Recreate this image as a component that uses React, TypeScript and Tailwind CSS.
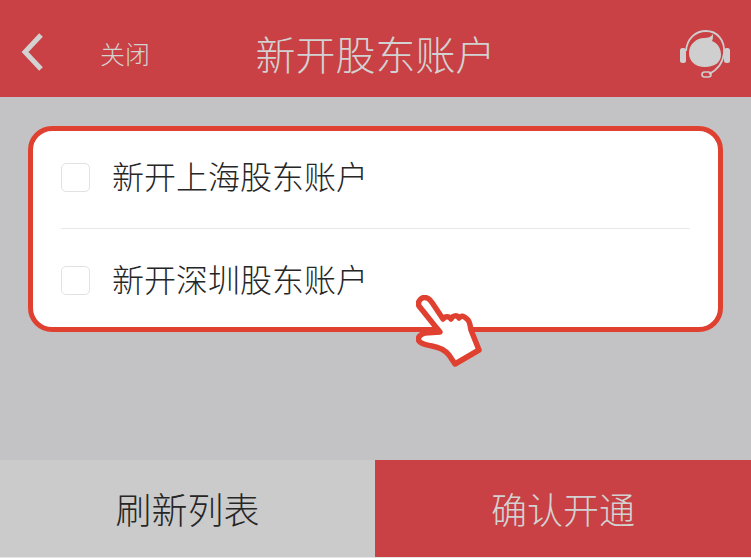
const cjk = { fontFamily: '"Noto Sans CJK SC", sans-serif' };

function Row({ label, className }: { label: string; className: string }) {
  return (
    <div className={`flex items-center ${className}`}>
      <span className="w-[29px] h-[29px] rounded-[5px] border border-[#e2e2e2] bg-white shrink-0" />
      <span className="ml-[22px] mb-[4px] text-[32px] leading-none text-[#262626] font-light">{label}</span>
    </div>
  );
}

function Hand() {
  return (
    <svg className="absolute left-[416px] top-[295px]" width="68" height="72" viewBox="0 0 68 72">
      <path
        d="M3 11 C1 6 6 1 11 3 C14 4 15 6 17 9 L27 24 C29 21 33 21 35 24 C37 20 41 20 43 23 C45 20 48 21 51 24 C54 26 54 30 55 35 L61 50 L63 55 L39 69 L33 60 C28 54 22 52 16 51 C10 50 5 49 3 46 C1 42 5 39 9 38 L24 37 L19 31 Z"
        fill="#ffffff"
        stroke="#e04030"
        strokeWidth="5.5"
        strokeLinejoin="round"
      />
    </svg>
  );
}

function Headset() {
  return (
    <svg width="50" height="50" viewBox="0 0 50 50" className="absolute left-[680px] top-[29px]">
      <path d="M6 22 C7 9 16 2 26 2 C37 2 45 11 44 24 C43 34 37 41 29 45" fill="none" stroke="#cfcfcf" strokeWidth="1.8" />
      <path d="M9 24 C9 15 17 9 24 9 C28 9 31 8 33 5 C33 8 33 10 32 12 C38 14 41 20 41 26 C41 33 35 38 25 38 C15 38 9 32 9 24 Z" fill="#cfcfcf" />
      <rect x="0" y="19" width="6" height="15" rx="2.5" fill="#cfcfcf" />
      <rect x="44" y="19" width="6" height="15" rx="2.5" fill="#cfcfcf" />
      <rect x="22" y="43" width="9" height="5" rx="2.5" fill="none" stroke="#cfcfcf" strokeWidth="1.6" />
    </svg>
  );
}

export default function App() {
  return (
    <div className="relative w-[751px] h-[558px] overflow-hidden flex flex-col bg-[#c3c3c6]" style={cjk}>
      <header className="h-[97px] shrink-0 bg-[#c94144] flex items-center relative text-[#d2d2d2]">
        <svg width="24" height="40" viewBox="0 0 24 40" className="ml-[21px] mt-[7px]">
          <path d="M20 3 L4 20 L20 37" fill="none" stroke="#d2d2d2" strokeWidth="5" />
        </svg>
        <span className="ml-[55px] mt-[10px] text-[25px] leading-none font-light">关闭</span>
        <span className="absolute left-0 right-0 text-center text-[40px] leading-none font-light mt-[9px]">新开股东账户</span>
      </header>
      <Headset />
      <main className="flex-1 pt-[29px] px-[28px]">
        <div className="h-[206px] w-[695px] rounded-[24px] border-[5px] border-[#e04030] bg-white pl-[28px] pr-[28px]">
          <div className="border-b border-[#e8e8e8] pb-[5px]">
            <Row label="新开上海股东账户" className="h-[92px]" />
          </div>
          <Row label="新开深圳股东账户" className="h-[98px] pt-[4px]" />
        </div>
      </main>
      <Hand />
      <footer className="h-[98px] shrink-0 flex border-b border-[#e6e6e6]">
        <button className="w-[375px] bg-[#cbcbcb] text-[#262626] text-[36px] font-light pb-[1px]">刷新列表</button>
        <button className="flex-1 bg-[#c94144] text-[#d2d2d2] text-[36px] font-light pb-[1px]">确认开通</button>
      </footer>
    </div>
  );
}
